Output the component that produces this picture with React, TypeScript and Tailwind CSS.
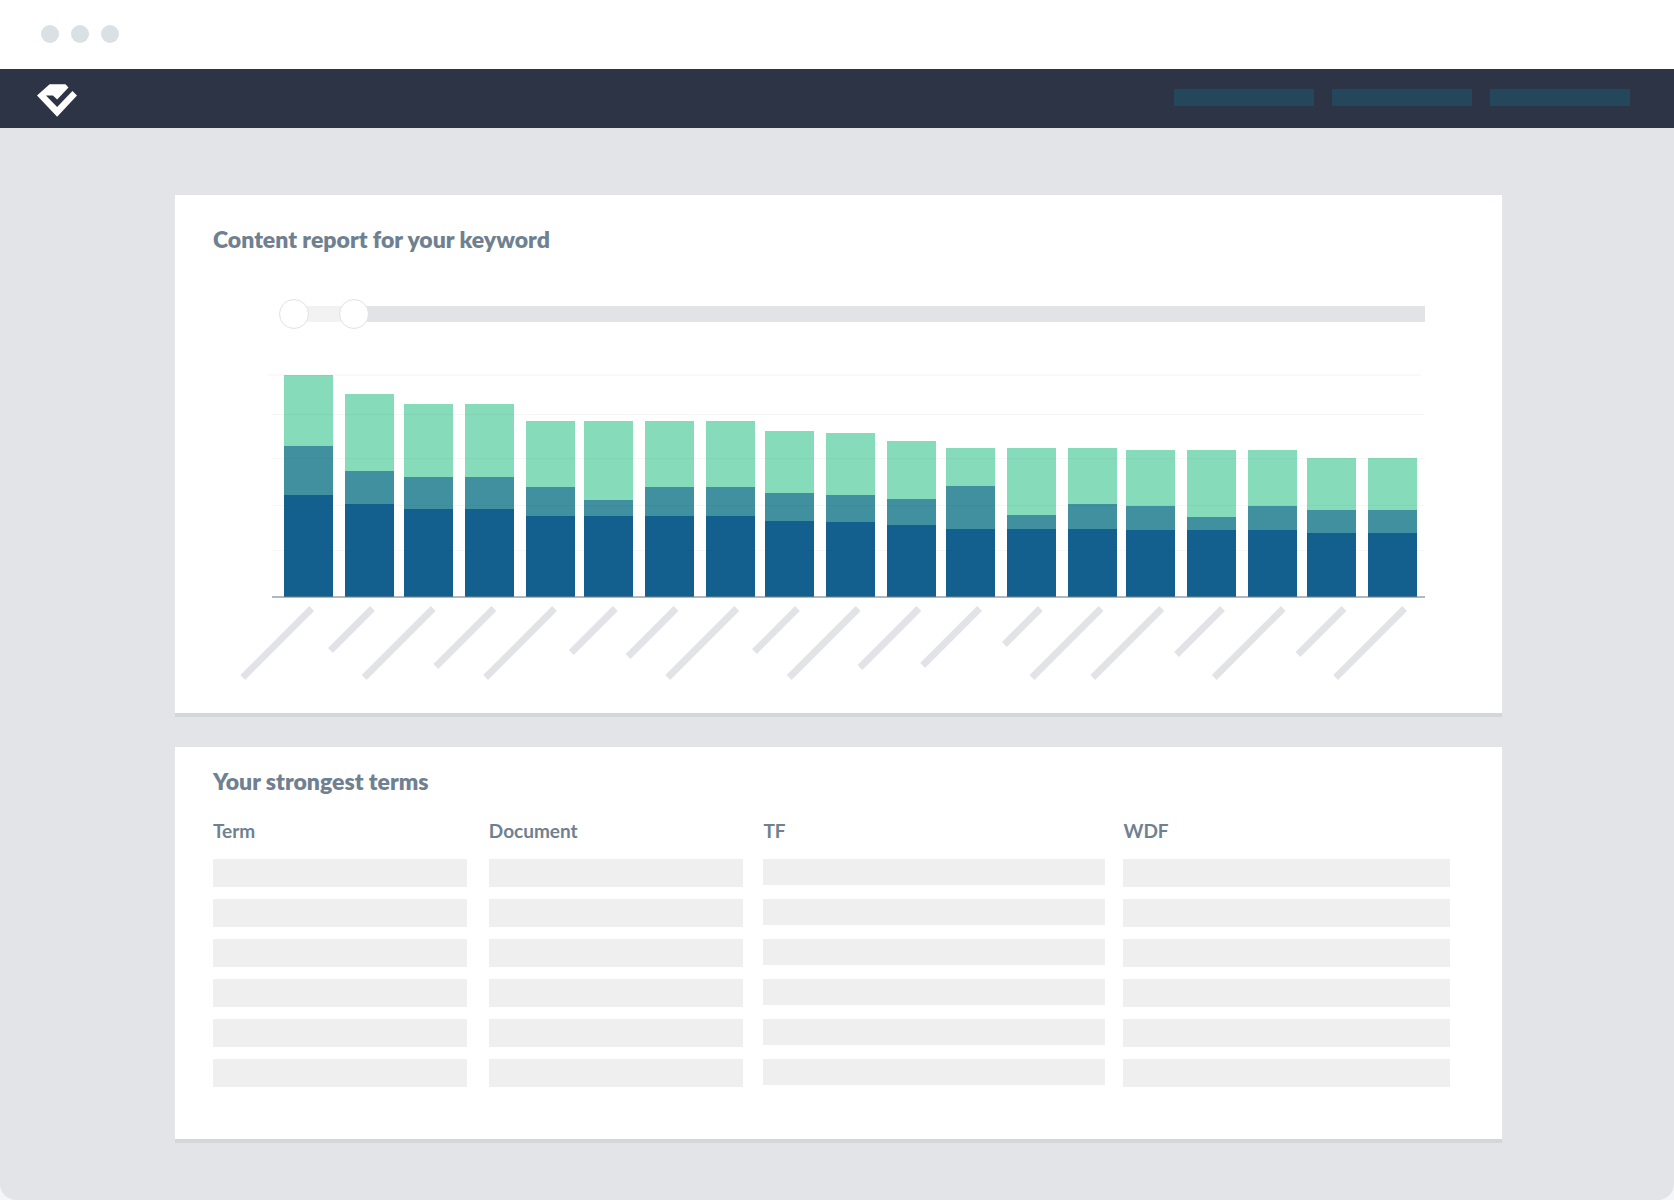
import React, { useState, type JSX } from "react";

type Bar = { x: number; total: number; mid: number; low: number; label: number };

// x = left edge, total/mid/low = heights from the axis, label = tick length
const BARS: Bar[] = [
  { x: 71, total: 222, mid: 151, low: 102, label: 69 },
  { x: 132, total: 203, mid: 126, low: 93, label: 42 },
  { x: 191, total: 193, mid: 120, low: 88, label: 69 },
  { x: 252, total: 193, mid: 120, low: 88, label: 58 },
  { x: 313, total: 176, mid: 110, low: 81, label: 69 },
  { x: 371, total: 176, mid: 97, low: 81, label: 44 },
  { x: 432, total: 176, mid: 110, low: 81, label: 48 },
  { x: 493, total: 176, mid: 110, low: 81, label: 69 },
  { x: 552, total: 166, mid: 104, low: 76, label: 43 },
  { x: 613, total: 164, mid: 102, low: 75, label: 69 },
  { x: 674, total: 156, mid: 98, low: 72, label: 59 },
  { x: 733, total: 149, mid: 111, low: 68, label: 57 },
  { x: 794, total: 149, mid: 82, low: 68, label: 36 },
  { x: 855, total: 149, mid: 93, low: 68, label: 69 },
  { x: 913, total: 147, mid: 91, low: 67, label: 69 },
  { x: 974, total: 147, mid: 80, low: 67, label: 46 },
  { x: 1035, total: 147, mid: 91, low: 67, label: 69 },
  { x: 1094, total: 139, mid: 87, low: 64, label: 46 },
  { x: 1155, total: 139, mid: 87, low: 64, label: 69 },
];

const BASE = 227;
const GRID = [44, 88, 135, 180];
const ROWS = [1, 2, 3, 4, 5, 6];
const MAX = 1000;

function Logo(): JSX.Element {
  return (
    <svg viewBox="0 0 40.3 32.7" className="h-[33px] w-10" aria-hidden="true">
      <path
        fill="#fff"
        d="M0 11.3 12.7 0H28.7L31.7 3.3 20.3 15.3 16 11.3H9L20.3 23 35.7 6.7 40.3 11.3 20.3 32.7Z"
      />
    </svg>
  );
}

function Chart(): JSX.Element {
  return (
    <svg viewBox="0 0 1237 315" className="block h-auto w-full" role="img" aria-label="Term frequency">
      {BARS.map((b) => (
        <g key={b.x}>
          <rect x={b.x} y={BASE - b.total} width="49" height={b.total - b.mid} fill="#86dbbb" />
          <rect x={b.x} y={BASE - b.mid} width="49" height={b.mid - b.low} fill="#4190a0" />
          <rect x={b.x} y={BASE - b.low} width="49" height={b.low} fill="#13608f" />
        </g>
      ))}

      <rect x="55" y="4" width="1153" height="2" fill="#000" opacity="0.025" />
      {GRID.map((y) => (
        <rect key={y} x="59" y={y} width="1153" height="1" fill="#000" opacity="0.03" />
      ))}
      <rect x="59" y="226" width="1153" height="2" fill="#6e7f90" opacity="0.55" />

      {BARS.map((b, i) => {
        const x = 98.7 + i * 60.72;
        return (
          <line
            key={b.x}
            x1={x}
            y1="238.5"
            x2={x - b.label}
            y2={238.5 + b.label}
            stroke="#e2e3e7"
            strokeWidth="6.8"
          />
        );
      })}
    </svg>
  );
}

const thumb =
  "pointer-events-none absolute inset-0 h-[30px] w-full appearance-none bg-transparent outline-none [&::-webkit-slider-thumb]:pointer-events-auto [&::-webkit-slider-thumb]:size-[30px] [&::-webkit-slider-thumb]:appearance-none [&::-webkit-slider-thumb]:rounded-full [&::-webkit-slider-thumb]:border [&::-webkit-slider-thumb]:border-[#e2e2e2] [&::-webkit-slider-thumb]:bg-white";

function RangeSlider(): JSX.Element {
  const [from, setFrom] = useState(0);
  const [to, setTo] = useState(54);

  return (
    <div className="relative h-[30px]">
      <div className="flex h-full items-center pl-[15px]">
        <div className="flex h-4 flex-1 bg-[#e2e3e7]">
          <div className="bg-[#f2f2f2]" style={{ width: `${(to / MAX) * 100}%` }} />
        </div>
      </div>
      <input
        type="range"
        aria-label="From"
        min={0}
        max={MAX}
        value={from}
        onChange={(e) => setFrom(Math.min(Number(e.target.value), to))}
        className={thumb}
      />
      <input
        type="range"
        aria-label="To"
        min={0}
        max={MAX}
        value={to}
        onChange={(e) => setTo(Math.max(Number(e.target.value), from))}
        className={thumb}
      />
    </div>
  );
}

export default function App(): JSX.Element {
  return (
    <div className="min-h-screen bg-[#f3f6fa] font-['Lato',sans-serif] text-[#6f8191]">
      <div className="flex min-h-screen flex-col overflow-hidden rounded-b-2xl bg-[#e2e4e8]">
        <div className="flex h-[69px] items-center gap-3 bg-white pb-0.5 pl-[41px]">
          <span className="size-[18px] rounded-full bg-[#d9e1e4]" />
          <span className="size-[18px] rounded-full bg-[#d9e1e4]" />
          <span className="size-[18px] rounded-full bg-[#d9e1e4]" />
        </div>

        <header className="flex h-[59px] items-start justify-between bg-[#2d3446] pl-[37px] pr-11">
          <a href="#" aria-label="Home" className="mt-[15px]">
            <Logo />
          </a>
          <nav className="mt-5 flex gap-[18px]">
            <a href="#" aria-label="Reports" className="h-[17px] w-[140px] bg-[#24475b]" />
            <a href="#" aria-label="Keywords" className="h-[17px] w-[140px] bg-[#24475b]" />
            <a href="#" aria-label="Account" className="h-[17px] w-[140px] bg-[#24475b]" />
          </nav>
        </header>

        <main className="flex flex-col gap-[30px] pb-14 pl-[175px] pr-[172px] pt-[67px]">
          <section className="border-b-4 border-[#d5d6d8] bg-white pb-7 pl-[38px] pr-[52px] pt-7">
            <h1 className="text-[23px] leading-8 font-extrabold">Content report for your keyword</h1>
            <div className="mt-11 pl-[66px] pr-[25px]">
              <RangeSlider />
            </div>
            <div className="mt-[41px]">
              <Chart />
            </div>
          </section>

          <section className="border-b-4 border-[#d5d6d8] bg-white pb-10 pl-[38px] pr-[52px] pt-[18px]">
            <h2 className="text-[23px] leading-8 font-extrabold">Your strongest terms</h2>
            <table className="mt-5 w-full table-fixed border-collapse text-left">
              <thead>
                <tr className="h-[42px] align-top text-[19px] leading-7">
                  <th className="w-[22.3%] p-0 font-bold">Term</th>
                  <th className="w-[22.2%] p-0 font-bold">Document</th>
                  <th className="w-[29.1%] p-0 font-bold">TF</th>
                  <th className="p-0 font-bold">WDF</th>
                </tr>
              </thead>
              <tbody>
                {ROWS.map((row) => (
                  <tr key={row} className="h-10 align-top">
                    <td className="p-0 pr-[22px]">
                      <div className="h-7 bg-[#efefef]" />
                    </td>
                    <td className="p-0 pr-5">
                      <div className="h-7 bg-[#efefef]" />
                    </td>
                    <td className="p-0 pr-[18px]">
                      <div className="h-[26px] bg-[#efefef]" />
                    </td>
                    <td className="p-0">
                      <div className="h-7 bg-[#efefef]" />
                    </td>
                  </tr>
                ))}
              </tbody>
            </table>
          </section>
        </main>
      </div>
    </div>
  );
}
